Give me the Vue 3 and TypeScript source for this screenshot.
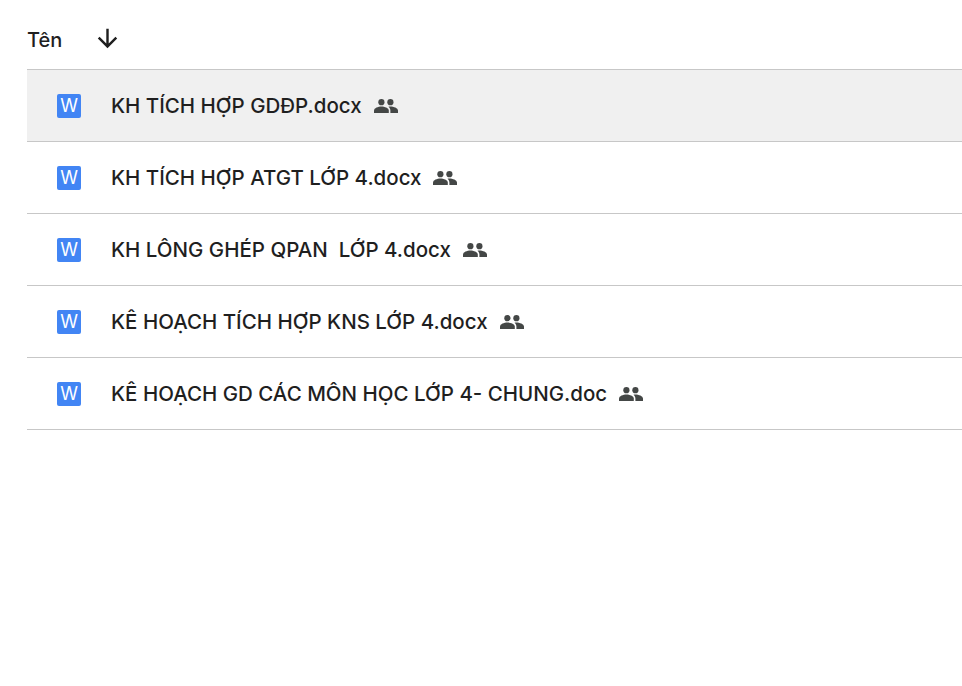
<script setup lang="ts">
const files = [
  { name: 'KH TÍCH HỢP GDĐP.docx', active: true },
  { name: 'KH TÍCH HỢP ATGT LỚP 4.docx', active: false },
  { name: 'KH LÔNG GHÉP QPAN  LỚP 4.docx', active: false },
  { name: 'KÊ HOẠCH TÍCH HỢP KNS LỚP 4.docx', active: false },
  { name: 'KÊ HOẠCH GD CÁC MÔN HỌC LỚP 4- CHUNG.doc', active: false },
]
</script>

<template>
  <div class="page">
    <div class="head">
      <span class="head-title">Tên</span>
      <svg class="arrow" viewBox="0 0 24 24" width="29" height="29">
        <path d="M20 12l-1.41-1.41L13 16.17V4h-2v12.17l-5.58-5.59L4 12l8 8 8-8z" />
      </svg>
    </div>
    <div v-for="file in files" :key="file.name" class="row" :class="{ active: file.active }">
      <span class="word">W</span>
      <span class="name">{{ file.name }}</span>
      <svg class="people" viewBox="0 0 24 14" width="24" height="14">
        <circle cx="7.4" cy="3.2" r="3.1" />
        <circle cx="16.4" cy="3.2" r="3.1" />
        <path d="M0 14v-2.4C0 9.2 4.2 7.6 7.4 7.6s7.4 1.6 7.4 4V14z" />
        <path d="M16.4 14v-2.4c0-1.5-.7-2.8-1.9-3.8.7-.1 1.3-.2 1.9-.2 3.2 0 7.6 1.6 7.6 4V14z" />
      </svg>
    </div>
  </div>
</template>

<style>
html,
body {
  background: #fff;
}
</style>

<style scoped>
.page {
  width: 962px;
  height: 686px;
  padding-left: 27px;
  box-sizing: border-box;
  overflow: hidden;
  font-family: Inter, 'Noto Sans', sans-serif;
  color: #1f1f1f;
}

.head {
  height: 61px;
  padding-top: 8px;
  display: flex;
  align-items: center;
  border-bottom: 1px solid #c7c7c7;
}

.head-title {
  font-size: 20px;
  font-weight: 450;
  width: 66px;
  margin-top: 2px;
}

.arrow {
  fill: #1f1f1f;
}

.row {
  height: 71px;
  display: flex;
  align-items: center;
  padding-left: 30px;
  border-bottom: 1px solid #c7c7c7;
}

.row.active {
  background: #f0f0f0;
}

.word {
  width: 24px;
  height: 24px;
  border-radius: 2px;
  background: #4285f4;
  color: #fff;
  font-size: 18px;
  line-height: 24px;
  text-align: center;
  margin-right: 30px;
}

.name {
  font-size: 20.5px;
  font-weight: 450;
  white-space: pre;
}

.people {
  fill: #444746;
  margin-left: 12px;
}
</style>
